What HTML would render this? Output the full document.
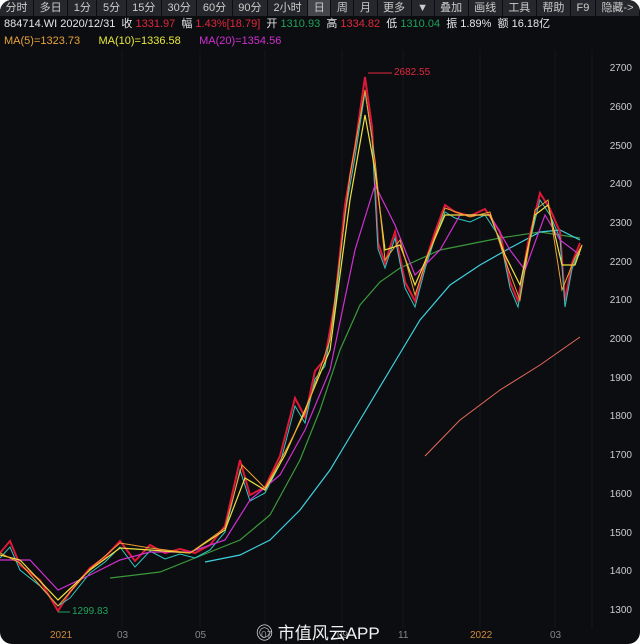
<!DOCTYPE html>
<html><head><meta charset="utf-8"><style>
html,body{margin:0;padding:0;background:#fff;}
.w{position:relative;width:640px;height:644px;background:#0c0d11;border-radius:12px;overflow:hidden;font-family:"Liberation Sans","Noto Sans CJK SC",sans-serif;color:#ddd;}
.tb{position:absolute;left:0;top:0;width:640px;height:16px;background:#0c0d11;display:flex;font-size:11px;}
.tb span{flex:auto;text-align:center;line-height:16px;margin-right:1px;background:#26272c;color:#ccc;white-space:nowrap}
.tb span.a{background:#44464c}
.r2{position:absolute;left:4px;top:16px;font-size:11px;line-height:16px;white-space:nowrap;color:#e6e6e6}
.r3{position:absolute;left:4px;top:34px;font-size:11px;line-height:14px;white-space:nowrap}
.red{color:#e0283c}.grn{color:#1fa25a}
.ax{position:absolute;right:8px;font-size:10px;color:#ccc}
.xl{position:absolute;top:630px;font-size:10px;color:#888}
</style></head><body><div class="w">
<div class="tb"><span>分时</span><span>多日</span><span>1分</span><span>5分</span><span>15分</span><span>30分</span><span>60分</span><span>90分</span><span>2小时</span><span class="a">日</span><span>周</span><span>月</span><span>更多</span><span>▼</span><span>叠加</span><span>画线</span><span>工具</span><span>帮助</span><span>F9</span><span>隐藏-&gt;</span></div>
<div class="r2">884714.WI 2020/12/31 &nbsp;收 <span class="red">1331.97</span> &nbsp;幅 <span class="red">1.43%[18.79]</span> &nbsp;开 <span class="grn">1310.93</span> &nbsp;高 <span class="red">1334.82</span> &nbsp;低 <span class="grn">1310.04</span> &nbsp;振 1.89% &nbsp;额 16.18亿</div>
<div class="r3"><span style="color:#e8a33a">MA(5)=1323.73</span> &nbsp; &nbsp; &nbsp;<span style="color:#e8e83a">MA(10)=1336.58</span> &nbsp; &nbsp; &nbsp;<span style="color:#d030d0">MA(20)=1354.56</span></div>
<svg style="position:absolute;left:0;top:0" width="640" height="644">
<g stroke="#16171c" stroke-width="1"><line x1="122" y1="50" x2="122" y2="628"/><line x1="200" y1="50" x2="200" y2="628"/><line x1="265" y1="50" x2="265" y2="628"/><line x1="342" y1="50" x2="342" y2="628"/><line x1="403" y1="50" x2="403" y2="628"/><line x1="480" y1="50" x2="480" y2="628"/><line x1="555" y1="50" x2="555" y2="628"/><line x1="592" y1="50" x2="592" y2="628"/></g>
<polyline fill="none" stroke="#e86a5a" stroke-width="1" points="425,456 460,420 500,390 540,365 580,337"/>
<polyline fill="none" stroke="#3a9a3a" stroke-width="1.2" points="110,578 160,572 200,556 240,540 270,515 300,460 320,410 340,350 360,305 380,282 400,268 440,250 500,238 540,232 580,238"/>
<polyline fill="none" stroke="#40d0e0" stroke-width="1.2" points="205,562 240,555 270,540 300,510 330,470 360,420 390,370 420,320 450,285 480,265 510,248 540,232 560,230 580,240"/>
<polyline fill="none" stroke="#e01838" stroke-width="2" points="0,553 10,541 20,565 40,580 58,611 70,592 90,568 105,557 120,541 135,561 150,545 165,553 180,549 195,553 210,545 225,526 240,460 250,495 265,487 280,456 295,398 305,417 315,371 325,359 335,301 345,205 355,147 365,77 372,127 378,243 385,263 395,232 405,282 415,301 425,263 435,232 445,205 455,212 470,216 485,209 500,232 510,282 518,301 528,243 540,193 550,209 560,232 565,301 572,263 580,243"/>
<polyline fill="none" stroke="#30c8c0" stroke-width="1" points="0,558 10,547 20,570 40,586 58,606 70,598 90,573 105,562 120,547 135,567 150,551 165,559 180,554 195,558 210,550 225,532 240,470 250,501 265,493 280,464 295,406 305,423 315,379 325,366 335,309 345,214 355,157 365,92 372,137 378,249 385,268 395,238 405,288 415,307 425,269 435,238 445,212 455,218 470,222 485,215 500,238 510,288 518,307 528,249 540,200 550,215 560,238 565,307 572,269 580,249"/>
<polyline fill="none" stroke="#d030d0" stroke-width="1.2" points="0,560 30,560 58,590 90,575 120,560 150,552 190,552 225,540 250,500 280,475 305,430 330,370 355,250 375,185 395,225 415,275 440,250 460,215 490,215 510,250 525,270 545,215 560,240 580,255"/>
<polyline fill="none" stroke="#f0e040" stroke-width="1.2" points="0,555 20,560 58,600 90,570 120,548 150,550 190,553 225,530 245,478 265,490 285,455 305,410 330,350 350,200 365,115 375,170 385,250 400,245 415,285 430,250 445,215 470,215 490,215 505,255 520,285 535,215 548,205 562,265 575,265 582,245"/>
<polyline fill="none" stroke="#f0a030" stroke-width="1" points="0,553 20,563 58,606 90,569 120,543 150,548 190,553 225,528 242,465 265,488 285,452 305,413 330,340 350,175 365,90 375,160 385,260 400,240 415,295 430,250 445,208 470,217 490,212 505,260 520,300 535,210 548,200 562,290 575,258 582,245"/>
<line x1="368" y1="73" x2="392" y2="73" stroke="#e0283c"/>
<line x1="58" y1="612" x2="70" y2="612" stroke="#1fa25a"/>
</svg>
<div style="position:absolute;left:394px;top:67px;font-size:10px;color:#e0283c">2682.55</div>
<div style="position:absolute;left:72px;top:606px;font-size:10px;color:#1fa25a">1299.83</div>
<div class="ax" style="top:63px">2700</div><div class="ax" style="top:102px">2600</div><div class="ax" style="top:141px">2500</div><div class="ax" style="top:179px">2400</div><div class="ax" style="top:218px">2300</div><div class="ax" style="top:257px">2200</div><div class="ax" style="top:295px">2100</div><div class="ax" style="top:334px">2000</div><div class="ax" style="top:373px">1900</div><div class="ax" style="top:411px">1800</div><div class="ax" style="top:450px">1700</div><div class="ax" style="top:489px">1600</div><div class="ax" style="top:528px">1500</div><div class="ax" style="top:566px">1400</div><div class="ax" style="top:605px">1300</div>
<div class="xl" style="left:50px;color:#d08a3a">2021</div><div class="xl" style="left:117px">03</div><div class="xl" style="left:195px">05</div><div class="xl" style="left:261px">07</div><div class="xl" style="left:337px">09</div><div class="xl" style="left:398px">11</div><div class="xl" style="left:470px;color:#d08a3a">2022</div><div class="xl" style="left:550px">03</div>
<div style="position:absolute;left:256px;top:619px;font-size:17px;color:#f2f2f2;white-space:nowrap">◎ 市值风云APP</div>
</div></body></html>
